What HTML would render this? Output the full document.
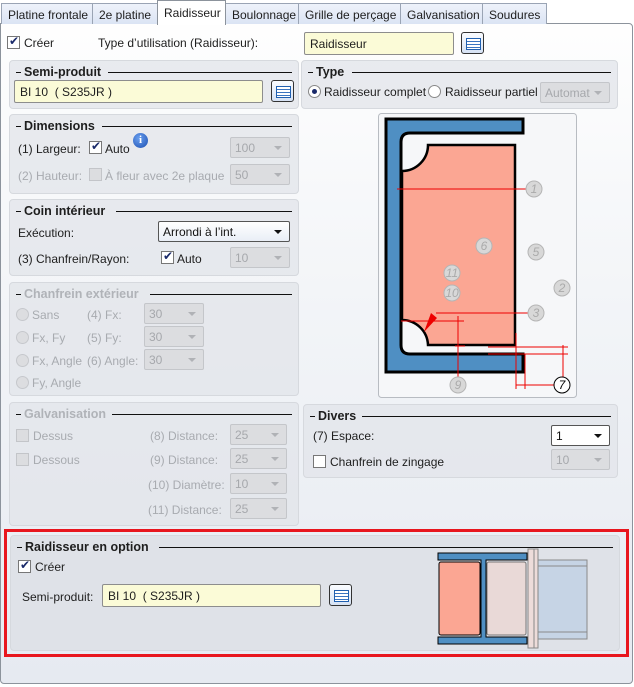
<!DOCTYPE html>
<html><head><meta charset="utf-8"><style>
*{box-sizing:border-box;margin:0;padding:0}
body{width:634px;height:687px;overflow:hidden;font-family:"Liberation Sans",sans-serif;font-size:12px;color:#1e1e1e;background:#fff;position:relative}
.a{position:absolute;white-space:nowrap}
.tab{position:absolute;top:3px;height:21px;border:1px solid #9aa4b4;border-bottom:none;background:linear-gradient(#eef2fa,#dbe4f4);padding:4px 0 0 6px;font-size:12px}
.panel{position:absolute;left:0;top:23px;width:633px;height:661px;border:1px solid #8c939c;border-radius:0 4px 4px 4px;background:linear-gradient(#fefefe 0%,#f3f5f8 40%,#e6eaf1 100%)}
.grp{position:absolute;border:1px solid #d6d9de;border-radius:4px;background:rgba(225,228,233,.75)}
.gt{position:absolute;left:6px;top:4px;right:6px;height:14px;font-weight:bold;font-size:12.5px}
.gt span{position:relative;padding:0 4px 0 0;margin-left:8px}
.gt:before{content:"";position:absolute;left:0;top:7px;width:5px;border-top:1px solid #111}
.gt i{position:absolute;top:7px;right:0;border-top:1px solid #111}
.dis{color:#a8abb0}
.cb{position:absolute;width:13px;height:13px;border:1px solid #777;background:#fff}
.cb.on:after{content:"✔";position:absolute;left:1px;top:-3px;font-size:12px;color:#1a2a6a}
.cb.d{border-color:#c3c5c9;background:#dcdde0}
.rb{position:absolute;width:13px;height:13px;border-radius:50%;border:1px solid #888;background:#fff}
.rb.on:after{content:"";position:absolute;left:3px;top:3px;width:5px;height:5px;border-radius:50%;background:#1a2a6a}
.rb.d{border-color:#c6c8cc;background:#dcdde0}
.sel{position:absolute;height:21px;border:1px solid #c4c6ca;background:#dcdde0;color:#a6a8ac;padding:3px 0 0 4px;border-radius:2px}
.sel:after{content:"";position:absolute;right:7px;top:8px;border:4px solid transparent;border-top:4px solid #b0b2b6}
.sel.en{background:#fff;border-color:#555;color:#111}
.sel.en:after{border-top-color:#111}
.inp{position:absolute;height:23px;border:1px solid #8d8d8d;background:#fbfbd7;padding:4px 0 0 5px;border-radius:2px}
.btn{position:absolute;width:23px;height:22px;border:1px solid #333;border-radius:3px;background:linear-gradient(#fafcff,#d6e2f4)}
.btn:after{content:"";position:absolute;left:4px;top:5px;width:13px;height:10px;border:1px solid #2060b0;background:repeating-linear-gradient(#fff 0 2px,#3a74c0 2px 3px)}
</style></head><body>
<div class="panel"></div>
<div class="tab" style="left:1px;width:92px">Platine frontale</div>
<div class="tab" style="left:92px;width:66px">2e platine</div>
<div class="tab" style="left:225px;width:74px">Boulonnage</div>
<div class="tab" style="left:298px;width:103px">Grille de perçage</div>
<div class="tab" style="left:400px;width:83px">Galvanisation</div>
<div class="tab" style="left:482px;width:65px">Soudures</div>
<div class="tab" style="left:157px;top:0;width:69px;height:25px;background:#fff;border-color:#8c939c;padding-top:5px">Raidisseur</div>

<div class="cb on" style="left:7px;top:36px"></div><div class="a" style="left:24px;top:36px">Créer</div>
<div class="a" style="left:98px;top:36px">Type d’utilisation (Raidisseur):</div>
<div class="inp" style="left:304px;top:32px;width:150px">Raidisseur</div>
<div class="btn" style="left:461px;top:32px"></div>

<div class="grp" style="left:9px;top:60px;width:290px;height:49px"><div class="gt"><span>Semi-produit</span><i style="left:92px"></i></div></div>
<div class="inp" style="left:14px;top:80px;width:249px">BI 10&nbsp; ( S235JR )</div>
<div class="btn" style="left:271px;top:80px"></div>

<div class="grp" style="left:301px;top:60px;width:317px;height:49px"><div class="gt"><span>Type</span><i style="left:44px"></i></div></div>
<div class="rb on" style="left:308px;top:85px"></div><div class="a" style="left:324px;top:85px">Raidisseur complet</div>
<div class="rb" style="left:428px;top:85px"></div><div class="a" style="left:445px;top:85px">Raidisseur partiel</div>
<div class="sel" style="left:540px;top:82px;width:70px">Automat</div>

<div class="grp" style="left:9px;top:114px;width:290px;height:80px"><div class="gt"><span>Dimensions</span><i style="left:86px"></i></div></div>
<div class="a" style="left:18px;top:142px">(1) Largeur:</div>
<div class="cb on" style="left:89px;top:141px"></div><div class="a" style="left:105px;top:142px">Auto</div>
<div class="a" style="left:133px;top:133px;width:15px;height:15px;border-radius:50%;background:radial-gradient(circle at 40% 35%,#6aa0f0,#1c4fb0);color:#fff;font-weight:bold;font-size:11px;text-align:center;line-height:15px;font-family:'Liberation Serif',serif">i</div>
<div class="sel" style="left:230px;top:137px;width:60px">100</div>
<div class="a dis" style="left:18px;top:169px">(2) Hauteur:</div>
<div class="cb d" style="left:89px;top:168px"></div><div class="a dis" style="left:105px;top:169px">À fleur avec 2e plaque</div>
<div class="sel" style="left:230px;top:164px;width:60px">50</div>

<div class="grp" style="left:9px;top:199px;width:290px;height:77px"><div class="gt"><span>Coin intérieur</span><i style="left:100px"></i></div></div>
<div class="a" style="left:18px;top:226px">Exécution:</div>
<div class="sel en" style="left:158px;top:221px;width:132px;background:linear-gradient(#fff,#e9eef6)">Arrondi à l’int.</div>
<div class="a" style="left:18px;top:252px">(3) Chanfrein/Rayon:</div>
<div class="cb on" style="left:161px;top:251px"></div><div class="a" style="left:177px;top:252px">Auto</div>
<div class="sel" style="left:230px;top:247px;width:60px">10</div>

<div class="grp" style="left:9px;top:282px;width:290px;height:114px"><div class="gt dis"><span style="color:#b0b3b8">Chanfrein extérieur</span><i style="left:134px"></i></div></div>
<div class="rb d" style="left:16px;top:308px"></div><div class="a dis" style="left:32px;top:308px">Sans</div>
<div class="a dis" style="left:87px;top:308px">(4) Fx:</div><div class="sel" style="left:144px;top:303px;width:60px">30</div>
<div class="rb d" style="left:16px;top:331px"></div><div class="a dis" style="left:32px;top:331px">Fx, Fy</div>
<div class="a dis" style="left:87px;top:331px">(5) Fy:</div><div class="sel" style="left:144px;top:326px;width:60px">30</div>
<div class="rb d" style="left:16px;top:354px"></div><div class="a dis" style="left:32px;top:354px">Fx, Angle</div>
<div class="a dis" style="left:87px;top:354px">(6) Angle:</div><div class="sel" style="left:144px;top:349px;width:60px">30</div>
<div class="rb d" style="left:16px;top:376px"></div><div class="a dis" style="left:32px;top:376px">Fy, Angle</div>

<div class="grp" style="left:9px;top:402px;width:290px;height:124px"><div class="gt dis"><span style="color:#b0b3b8">Galvanisation</span><i style="left:96px"></i></div></div>
<div class="cb d" style="left:16px;top:429px"></div><div class="a dis" style="left:33px;top:429px">Dessus</div>
<div class="cb d" style="left:16px;top:453px"></div><div class="a dis" style="left:33px;top:453px">Dessous</div>
<div class="a dis" style="left:150px;top:429px">(8) Distance:</div><div class="sel" style="left:230px;top:424px;width:57px">25</div>
<div class="a dis" style="left:150px;top:453px">(9) Distance:</div><div class="sel" style="left:230px;top:448px;width:57px">25</div>
<div class="a dis" style="left:148px;top:478px">(10) Diamètre:</div><div class="sel" style="left:230px;top:473px;width:57px">10</div>
<div class="a dis" style="left:148px;top:503px">(11) Distance:</div><div class="sel" style="left:230px;top:498px;width:57px">25</div>

<div class="grp" style="left:303px;top:404px;width:315px;height:74px"><div class="gt"><span>Divers</span><i style="left:52px"></i></div></div>
<div class="a" style="left:313px;top:429px">(7) Espace:</div>
<div class="sel en" style="left:551px;top:425px;width:59px">1</div>
<div class="cb" style="left:313px;top:455px"></div><div class="a" style="left:330px;top:455px">Chanfrein de zingage</div>
<div class="sel" style="left:551px;top:449px;width:59px">10</div>

<svg class="a" style="left:378px;top:113px" width="200" height="286" viewBox="378 113 200 286">
<rect x="378.5" y="113.5" width="198" height="284" rx="3" fill="#f6f7f9" stroke="#b8bcc2"/>
<path d="M386 119 H523 V133 H410 Q401 133 401 142 V345 Q401 354 410 354 H523 V372 H386 Z" fill="#4f8fc3" stroke="#000" stroke-width="3"/>
<path d="M428 145 H515 V345 H428 A26 26 0 0 0 402 320 V171 A26 26 0 0 0 428 145 Z" fill="#fba693" stroke="#000" stroke-width="2.5"/>
<g stroke="#e00" fill="none" stroke-width="1">
<line x1="397" y1="189" x2="526" y2="189"/>
<line x1="436" y1="313" x2="529" y2="313"/>
<line x1="401" y1="321" x2="464" y2="321"/>
<line x1="458" y1="316" x2="458" y2="378"/>
<line x1="455" y1="346" x2="465" y2="346"/>
<line x1="488" y1="347" x2="568" y2="347"/>
<line x1="488" y1="354" x2="568" y2="354"/>
<line x1="516" y1="333" x2="516" y2="389"/>
<line x1="525" y1="354" x2="525" y2="389"/>
<line x1="516" y1="385" x2="555" y2="385"/>
<line x1="563" y1="345" x2="563" y2="377"/>
</g>
<path d="M424 332 L431 313 L437 318 Z" fill="#e00"/>
<g font-family="Liberation Sans" font-style="italic" font-size="12" text-anchor="middle" fill="#aaa">
<g fill="#d8d8d8" stroke="#b5b5b5"><circle cx="534" cy="189" r="8"/><circle cx="484" cy="246" r="8"/><circle cx="536" cy="252" r="8"/><circle cx="562" cy="288" r="8"/><circle cx="452" cy="273" r="8"/><circle cx="452" cy="293" r="8"/><circle cx="536" cy="313" r="8"/><circle cx="458" cy="385" r="8"/></g>
<text x="534" y="193">1</text><text x="484" y="250">6</text><text x="536" y="256">5</text><text x="562" y="292">2</text><text x="452" y="277">11</text><text x="452" y="297">10</text><text x="536" y="317">3</text><text x="458" y="389">9</text>
<circle cx="562" cy="385" r="8" fill="#fff" stroke="#000"/><text x="562" y="389" fill="#000">7</text>
</g>
</svg>

<div class="a" style="left:4px;top:529px;width:625px;height:128px;border:3px solid #e8161e"></div>
<div class="grp" style="left:10px;top:535px;width:610px;height:116px;background:#dfe2e8"><div class="gt"><span>Raidisseur en option</span><i style="left:142px"></i></div></div>
<div class="cb on" style="left:18px;top:560px"></div><div class="a" style="left:35px;top:560px">Créer</div>
<div class="a" style="left:22px;top:590px">Semi-produit:</div>
<div class="inp" style="left:102px;top:584px;width:219px">BI 10&nbsp; ( S235JR )</div>
<div class="btn" style="left:329px;top:584px"></div>

<svg class="a" style="left:430px;top:545px" width="170" height="105" viewBox="430 545 170 105">
<rect x="538" y="560" width="49" height="79" fill="#c6d4e5" stroke="#8a8a8a"/>
<line x1="538" y1="566" x2="587" y2="566" stroke="#8a8a8a"/><line x1="538" y1="632" x2="587" y2="632" stroke="#8a8a8a"/>
<path d="M438 553 H527 V560 H486 V637 H527 V644 H438 V637 H481 V560 H438 Z" fill="#4f8fc3" stroke="#000"/>
<rect x="439" y="562" width="41" height="73" rx="2" fill="#fba693" stroke="#000"/>
<rect x="487" y="562" width="39" height="73" rx="2" fill="#e9d9d7" stroke="#777"/>
<rect x="528" y="549" width="6" height="99" fill="#eddcda" stroke="#888"/>
<rect x="534" y="549" width="4" height="99" fill="#eddcda" stroke="#888"/>
</svg>
</body></html>
